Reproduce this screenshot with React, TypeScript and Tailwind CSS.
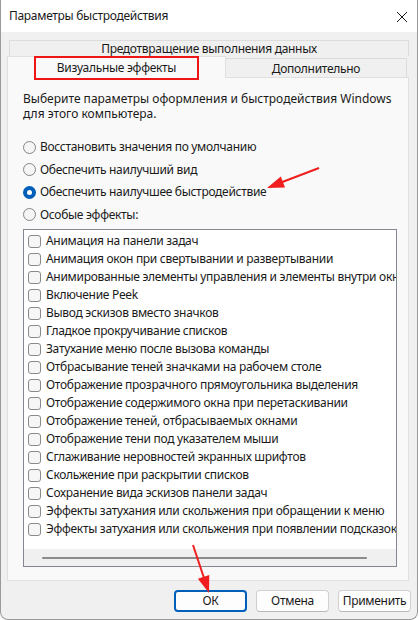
import React from "react";

const effects = [
  "Анимация на панели задач",
  "Анимация окон при свертывании и развертывании",
  "Анимированные элементы управления и элементы внутри окна",
  "Включение Peek",
  "Вывод эскизов вместо значков",
  "Гладкое прокручивание списков",
  "Затухание меню после вызова команды",
  "Отбрасывание теней значками на рабочем столе",
  "Отображение прозрачного прямоугольника выделения",
  "Отображение содержимого окна при перетаскивании",
  "Отображение теней, отбрасываемых окнами",
  "Отображение тени под указателем мыши",
  "Сглаживание неровностей экранных шрифтов",
  "Скольжение при раскрытии списков",
  "Сохранение вида эскизов панели задач",
  "Эффекты затухания или скольжения при обращении к меню",
  "Эффекты затухания или скольжения при появлении подсказок",
];

const options = [
  { label: "Восстановить значения по умолчанию", checked: false },
  { label: "Обеспечить наилучший вид", checked: false },
  { label: "Обеспечить наилучшее быстродействие", checked: true },
  { label: "Особые эффекты:", checked: false },
];

function Radio({ checked }: { checked: boolean }) {
  if (checked) {
    return (
      <span className="w-[13px] h-[13px] rounded-full bg-[#005fb8] flex items-center justify-center flex-shrink-0">
        <span className="w-[5px] h-[5px] rounded-full bg-white" />
      </span>
    );
  }
  return (
    <span className="w-[13px] h-[13px] rounded-full border border-[#858585] bg-[#f5f5f5] flex-shrink-0" />
  );
}

function Button({ label, primary }: { label: string; primary?: boolean }) {
  return (
    <button
      className={
        primary
          ? "w-[73px] h-[22px] rounded-[4px] border-2 border-[#005fb8] bg-[#fdfdfd] text-[12px] text-[#1a1a1a] flex items-center justify-center"
          : "w-[73px] h-[22px] rounded-[4px] border border-[#d0d0d0] border-b-[#b8b8b8] bg-[#fdfdfd] text-[12px] text-[#1a1a1a] flex items-center justify-center"
      }
    >
      {label}
    </button>
  );
}

export default function App() {
  return (
    <div
      className="relative w-[419px] h-[620px] bg-white overflow-hidden tracking-[-0.3px]"
      style={{ fontFamily: '"Noto Sans", "Open Sans", sans-serif' }}
    >
      <div className="w-[418px] h-[620px] border-l border-r border-b border-[#9a9a9a] rounded-b-[8px] overflow-hidden flex flex-col bg-[#f0f0f0]">
        {/* Title bar */}
        <div className="h-[32px] bg-white flex items-center justify-between pl-[8px] pr-[10px] flex-shrink-0">
          <span className="text-[12px] text-[#1a1a1a]">Параметры быстродействия</span>
          <svg viewBox="0 0 10 10" className="w-[10px] h-[10px] mt-[1px]" stroke="#1a1a1a" strokeWidth="1">
            <path d="M0 0 L10 10 M10 0 L0 10" />
          </svg>
        </div>

        {/* Tabs */}
        <div className="pl-[6px] pt-[8px] flex flex-col">
          <div className="ml-[2px] w-[400px] h-[16px] border border-b-0 border-[#dcdcdc] bg-[#f0f0f0] flex items-center justify-center text-[12px] text-[#1a1a1a] leading-none">
            Предотвращение выполнения данных
          </div>
          <div className="flex items-end">
            <div className="relative z-10 w-[219px] h-[22px] -mb-px border border-b-0 border-[#e0e0e0] bg-[#f9f9f9] flex items-center justify-center text-[12px] text-[#1a1a1a]">
              Визуальные эффекты
            </div>
            <div className="w-[181px] h-[19px] border border-b-0 border-l-0 border-[#dcdcdc] bg-[#f0f0f0] flex items-center justify-center text-[12px] text-[#1a1a1a] pt-[2px]">
              Дополнительно
            </div>
          </div>

          {/* Panel */}
          <div className="w-[402px] h-[504px] border border-[#e0e0e0] bg-[#f9f9f9] pl-[15px] pt-[13px] flex flex-col">
            <p className="text-[12px] leading-[15px] text-[#1a1a1a] tracking-normal">
              Выберите параметры оформления и быстродействия Windows
              <br />
              для этого компьютера.
            </p>

            <div className="mt-[15px] flex flex-col">
              {options.map((o) => (
                <div key={o.label} className="h-[22.5px] flex items-center gap-[4px] text-[12px] text-[#1a1a1a]">
                  <Radio checked={o.checked} />
                  <span>{o.label}</span>
                </div>
              ))}
            </div>

            {/* Effects list */}
            <div className="mt-[3px] w-[374px] h-[338px] border border-[#828790] bg-white flex flex-col overflow-hidden">
              <div className="pt-[2px] flex flex-col">
                {effects.map((e) => (
                  <div key={e} className="h-[18px] flex items-center gap-[5px] pl-[4px] whitespace-nowrap text-[12px] text-[#1a1a1a]">
                    <span className="w-[13px] h-[13px] rounded-[3px] border border-[#8a8a8a] bg-[#f6f6f6] flex-shrink-0" />
                    <span>{e}</span>
                  </div>
                ))}
              </div>
              <div className="mt-auto h-[17px] bg-[#f0f0f0] flex items-center pl-[18px]">
                <div className="w-[325px] h-[2px] rounded-full bg-[#8b8b8b]" />
              </div>
            </div>
          </div>

          {/* Buttons */}
          <div className="mt-[9px] flex justify-end gap-[9px] pr-[6px]">
            <Button label="ОК" primary />
            <Button label="Отмена" />
            <Button label="Применить" />
          </div>
        </div>
      </div>

      {/* Annotation: highlighted tab */}
      <div className="absolute z-20 left-[34px] top-[56px] w-[165px] h-[24px] border-2 border-[#f01515] pointer-events-none" />

      {/* Annotation arrows */}
      <svg className="absolute z-20 inset-0 pointer-events-none" width="419" height="620" viewBox="0 0 419 620">
        <line x1="319" y1="168" x2="281" y2="182.5" stroke="#f01e1e" strokeWidth="2" />
        <polygon points="267,188 285,187.6 280.8,176.4" fill="#f01e1e" />
        <line x1="193" y1="545" x2="204" y2="578" stroke="#f01e1e" strokeWidth="2" />
        <polygon points="209,593 209.3,575 197.9,578.8" fill="#f01e1e" />
      </svg>
    </div>
  );
}
